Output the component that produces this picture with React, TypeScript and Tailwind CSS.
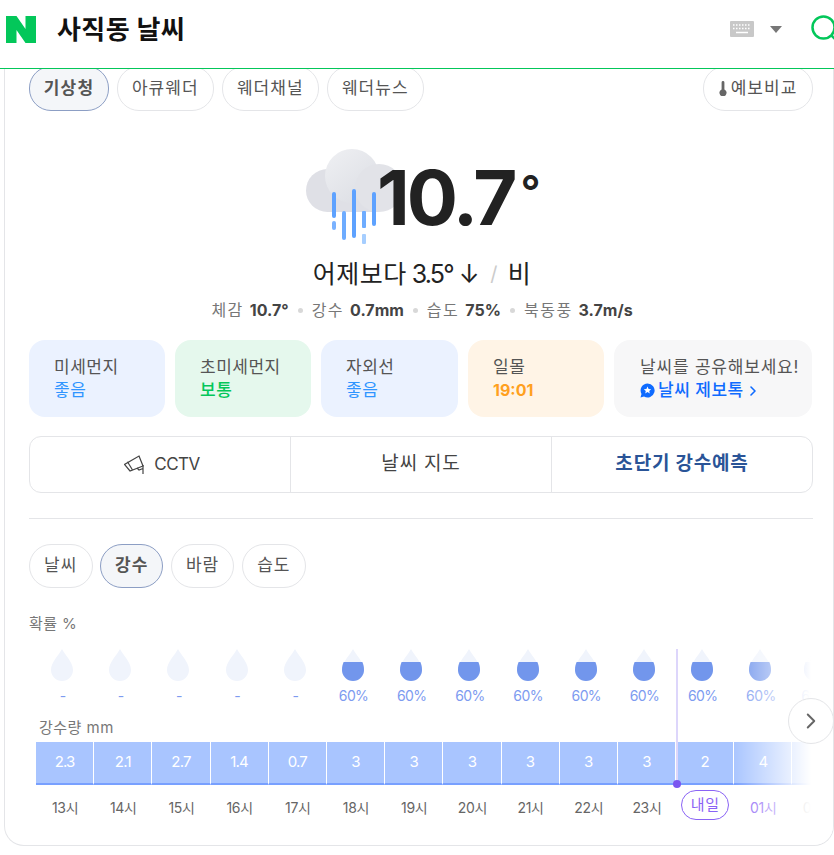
import { ChevronRight } from 'lucide-react';

const sourceTabs = ['아큐웨더', '웨더채널', '웨더뉴스'];
const chartTabs = ['날씨', '강수', '바람', '습도'];

const hours = [
  { amount: '2.3', chance: '-', time: '13시' },
  { amount: '2.1', chance: '-', time: '14시' },
  { amount: '2.7', chance: '-', time: '15시' },
  { amount: '1.4', chance: '-', time: '16시' },
  { amount: '0.7', chance: '-', time: '17시' },
  { amount: '3', chance: '60%', time: '18시' },
  { amount: '3', chance: '60%', time: '19시' },
  { amount: '3', chance: '60%', time: '20시' },
  { amount: '3', chance: '60%', time: '21시' },
  { amount: '3', chance: '60%', time: '22시' },
  { amount: '3', chance: '60%', time: '23시' },
  { amount: '2', chance: '60%', time: '내일' },
  { amount: '4', chance: '60%', time: '01시' },
  { amount: '', chance: '60%', time: '02시' },
];

const Drop = ({ filled }: { filled: boolean }) => (
  <svg width="24" height="32" viewBox="0 0 24 32">
    <path d="M12 0 C15 6 23 13 23 21 A11 11 0 0 1 1 21 C1 13 9 6 12 0 Z" fill="#f0f4fc" />
    {filled && <path d="M2.600 13 L21.400 13 C22.500 15.500 23 18 23 21 A11 11 0 0 1 1 21 C1 18 1.500 15.500 2.600 13 Z" fill="#7296ec" />}
  </svg>
);

const RainCloud = () => (
  <svg width="100" height="100" viewBox="0 0 100 100" className="shrink-0">
    <defs>
      <linearGradient id="cloud" x1="0" y1="0" x2="0.8" y2="1">
        <stop offset="0" stopColor="#eff0f3" />
        <stop offset="1" stopColor="#dcdee4" />
      </linearGradient>
    </defs>
    <circle cx="22.500" cy="42.500" r="21.500" fill="#dfe0e6" />
    <rect x="22" y="36" width="52" height="28" fill="#dfe0e6" />
    <circle cx="47" cy="28" r="27" fill="url(#cloud)" />
    <circle cx="74" cy="40" r="24" fill="#e2e3e8" />
    <g fill="#5ea2ff">
      <rect x="27" y="44" width="4" height="26" rx="2" />
      <rect x="27" y="73" width="4" height="9" rx="2" fill="#7ab2ff" />
      <rect x="37" y="63" width="4" height="29" rx="2" fill="#6eacff" />
      <rect x="47" y="41" width="4" height="49" rx="2" />
      <rect x="57" y="63" width="4" height="17" rx="1" fill="#6eacff" />
      <rect x="57" y="86" width="4" height="10" rx="1" fill="#a6ceff" />
      <rect x="67" y="44" width="4" height="34" rx="2" />
    </g>
  </svg>
);

const App = () => {
  return (
    <div className="w-[834px] h-[855px] overflow-hidden bg-white text-[#222] font-[Inter,'Noto_Sans_CJK_KR',sans-serif]">
      {/* Header */}
      <header className="relative z-10 h-[69px] bg-white border-b border-[#03c75a] flex items-center pl-[6px] pb-[10px]">
        <svg width="30" height="27" viewBox="0 0 30 27">
          <path d="M0 0 H10.500 L19.500 13 V0 H30 V27 H19.500 L10.500 14 V27 H0 Z" fill="#03c75a" />
        </svg>
        <h1 className="ml-[21px] mt-[2px] text-[26px] font-bold leading-none tracking-[0.4px] text-[#111]">사직동 날씨</h1>
        <div className="ml-auto flex items-center">
          <svg width="24" height="16" viewBox="0 0 24 16" className="mr-[16px]">
            <rect width="24" height="16" rx="1" fill="#c8c8c8" />
            <path d="M3 4 H21 M3 7.500 H21" stroke="#fff" strokeWidth="1.500" strokeDasharray="1.500 1.500" />
            <path d="M6 11.500 H18" stroke="#fff" strokeWidth="1.500" />
          </svg>
          <span className="mr-[29px] w-0 h-0 border-x-[6px] border-x-transparent border-t-[7px] border-t-[#777]" />
          <div className="w-[23px] overflow-hidden">
            <svg width="28" height="28" viewBox="0 0 28 28" className="block">
              <circle cx="12.500" cy="12.500" r="11" fill="none" stroke="#03c75a" strokeWidth="2.500" />
              <path d="M20 20 L26 26" stroke="#03c75a" strokeWidth="2.500" />
            </svg>
          </div>
        </div>
      </header>

      {/* Card */}
      <main className="relative ml-[4px] -mt-[3px] h-[780px] overflow-hidden rounded-b-[20px] border-x border-b border-[#e4e5e8] pl-[24px] pr-[20px]">
        <div className="flex gap-[7.5px]">
          <button className="h-[45px] w-[80px] rounded-[22px] border border-[#8c9ec4] bg-[#f4f6f9] text-[17px] font-bold tracking-[1.2px] text-[#555]">기상청</button>
          {sourceTabs.map((tab) => (
            <button key={tab} className="h-[45px] w-[97.5px] rounded-[22px] border border-[#e4e5e8] text-[17px] tracking-[1px] text-[#555]">{tab}</button>
          ))}
          <button className="ml-auto h-[45px] w-[110px] rounded-[22px] border border-[#e4e5e8] flex items-center justify-center gap-[4px] text-[17px] tracking-[1px] text-[#555]">
            <svg width="8" height="15" viewBox="0 0 8 16">
              <path d="M2.500 1.500 a1.500 1.500 0 0 1 3 0 V9 a3.800 3.800 0 1 1 -3 0 Z" fill="#666" />
            </svg>
            예보비교
          </button>
        </div>

        {/* Current weather */}
        <div className="mt-[37px] ml-[276px] flex items-start h-[100px]">
          <RainCloud />
          <div className="-ml-[28px] relative mt-[1px] text-[76px] font-bold leading-[96px] tracking-[-3px] text-[#222] whitespace-nowrap">
            10.7<span className="relative -top-[18px] ml-[6px] text-[44px] font-semibold">°</span>
          </div>
        </div>
        <div className="mt-[10px] flex justify-center items-center pl-[2px] text-[25px] leading-[32px] tracking-[0.5px] text-[#222]">
          어제보다<span className="ml-[5px] tracking-[-1.8px]">3.5°</span><span className="ml-[6px]">↓</span>
          <span className="mx-[10px] text-[#ccc] text-[20px]">/</span>비
        </div>
        <div className="mt-[9px] flex justify-center items-center gap-[9px] pl-[2px] text-[16px] leading-[22px] tracking-[1.5px] text-[#777]">
          <span>체감 <b className="tracking-normal text-[#444]">10.7°</b></span>
          <i className="w-[5px] h-[5px] rounded-full bg-[#d8d8d8]" />
          <span>강수 <b className="tracking-normal text-[#444]">0.7mm</b></span>
          <i className="w-[5px] h-[5px] rounded-full bg-[#d8d8d8]" />
          <span>습도 <b className="tracking-normal text-[#444]">75%</b></span>
          <i className="w-[5px] h-[5px] rounded-full bg-[#d8d8d8]" />
          <span>북동풍 <b className="tracking-normal text-[#444]">3.7m/s</b></span>
        </div>

        {/* Summary cards */}
        <div className="mt-[19px] flex gap-[10px] text-[17px] leading-[23px] tracking-[0.5px] text-[#555]">
          <div className="w-[136px] h-[77px] rounded-[16px] bg-[#ebf2ff] pl-[25px] pt-[16px]">
            <div>미세먼지</div>
            <div className="text-[#2f95ff]">좋음</div>
          </div>
          <div className="w-[136px] h-[77px] rounded-[16px] bg-[#e5f8ed] pl-[25px] pt-[16px]">
            <div>초미세먼지</div>
            <div className="font-medium text-[#03c75a]">보통</div>
          </div>
          <div className="w-[137px] h-[77px] rounded-[16px] bg-[#ebf2ff] pl-[25px] pt-[16px]">
            <div>자외선</div>
            <div className="text-[#2f95ff]">좋음</div>
          </div>
          <div className="w-[136px] h-[77px] rounded-[16px] bg-[#fff4e6] pl-[25px] pt-[16px]">
            <div>일몰</div>
            <div className="text-[16px] font-bold tracking-normal text-[#ffa01e]">19:01</div>
          </div>
          <div className="w-[198px] h-[77px] rounded-[16px] bg-[#f7f7f8] pl-[26px] pt-[16px]">
            <div className="whitespace-nowrap tracking-[0.8px]">날씨를 공유해보세요!</div>
            <div className="flex items-center gap-[3px] font-medium text-[#0f6bff]">
              <svg width="15" height="15" viewBox="0 0 15 15">
                <path d="M7.500 0.500 A7 7 0 1 1 4 13.500 L0.500 14.500 L1.500 11 A7 7 0 0 1 7.500 0.500 Z" fill="#0f6bff" />
                <path d="M7.500 3.500 L8.600 6 L11.200 6.200 L9.200 7.900 L9.800 10.500 L7.500 9.100 L5.200 10.500 L5.800 7.900 L3.800 6.200 L6.400 6 Z" fill="#fff" />
              </svg>
              날씨 제보톡
              <ChevronRight size={16} strokeWidth={2.4} className="-ml-[2px]" />
            </div>
          </div>
        </div>

        {/* Links */}
        <div className="mt-[19px] h-[57px] grid grid-cols-[261px_261px_1fr] rounded-[12px] border border-[#e4e5e8] text-[19px] tracking-[0.8px] text-[#444]">
          <div className="flex items-center justify-center gap-[10px] pl-[4px] border-r border-[#e4e5e8] text-[17px] tracking-[-0.5px]">
            <svg width="20" height="19" viewBox="0 0 20 19" fill="none" stroke="#444" strokeWidth="1.200">
              <path d="M15 1 L19 11 L6 16 L0.500 9.500 Z" />
              <path d="M3.500 6.800 L8.500 15" />
              <path d="M13 13 L15 15 L19 13.500 M19 10 V19" />
            </svg>
            CCTV
          </div>
          <div className="flex items-center justify-center border-r border-[#e4e5e8]">날씨 지도</div>
          <div className="flex items-center justify-center font-bold text-[#2a5497]">초단기 강수예측</div>
        </div>

        <div className="mt-[25px] border-t border-[#e4e5e8]" />

        {/* Chart tabs */}
        <div className="mt-[25px] flex gap-[7.7px]">
          {chartTabs.map((tab) => (
            <button
              key={tab}
              className={
                tab === '강수'
                  ? 'h-[44px] w-[63px] rounded-[22px] border border-[#8c9ec4] bg-[#f4f6f9] text-[17px] font-bold tracking-[1px] text-[#555]'
                  : 'h-[44px] w-[63.500px] rounded-[22px] border border-[#e4e5e8] text-[17px] tracking-[1px] text-[#555]'
              }
            >
              {tab}
            </button>
          ))}
        </div>

        <div className="mt-[26px] text-[15px] leading-[20px] tracking-[0.4px] text-[#777]">확률 %</div>

        {/* Hourly chart */}
        <div className="relative -mr-[20px] ml-[7px] mt-[15px] overflow-hidden pb-[30px]">
          <div className="-ml-[3px] flex">
            {hours.map((h, i) => (
              <div key={i} className={`shrink-0 flex flex-col items-center ${i === 13 ? 'w-[52px]' : 'w-[58.2px]'}`}>
                <Drop filled={h.chance !== '-'} />
                <div className="mt-[5px] ml-[1px] h-[20px] text-[14px] leading-[20px] tracking-[-0.6px] text-[#7d9bf0]">{h.chance}</div>
              </div>
            ))}
          </div>
          <div className="mt-[12px] pl-[3px] h-[20px] text-[15px] leading-[20px] tracking-[0.5px] text-[#777]">강수량 mm</div>
          <div className="mt-[4px] flex">
            {hours.map((h, i) => (
              <div key={i} className="w-[58.2px] shrink-0 h-[43px] border-r border-white bg-[#a9c5ff] border-b-[2px] border-b-[#78a0ff] flex items-center justify-center text-[15px] tracking-[-0.8px] text-white">
                {h.amount}
              </div>
            ))}
          </div>
          <div className="mt-[5px] flex h-[30px] items-center">
            {hours.map((h, i) => (
              <div key={i} className={`shrink-0 flex justify-center ${i === 13 ? 'w-[50px]' : 'w-[58.2px]'}`}>
                {h.time === '내일' ? (
                  <span className="w-[48px] h-[30px] rounded-full border border-[#8a63f5] text-[15px] leading-[27px] text-center tracking-[0.5px] text-[#8a63f5]">내일</span>
                ) : (
                  <span className={`mt-[4px] text-[14px] tracking-[-0.3px] ${i === 12 ? 'text-[#8a63f5]' : 'text-[#666]'}`}>{h.time}</span>
                )}
              </div>
            ))}
          </div>

          {/* Now marker */}
          <div className="absolute left-[640px] top-0 w-[2px] h-[136px] bg-[#ddd6fb]" />
          <div className="absolute left-[637px] top-[131px] w-[8px] h-[8px] rounded-full bg-[#7a56f0]" />

          {/* Fade on the right edge */}
          <div className="absolute right-0 top-0 bottom-0 w-[100px] bg-gradient-to-r from-white/0 to-white to-[78%]" />
        </div>

        <button className="absolute -right-px top-[632px] w-[46px] h-[46px] rounded-full border border-[#e4e5e8] bg-white flex items-center justify-center text-[#666]">
          <ChevronRight size={26} strokeWidth={1.8} />
        </button>
      </main>
    </div>
  );
};

export default App;
